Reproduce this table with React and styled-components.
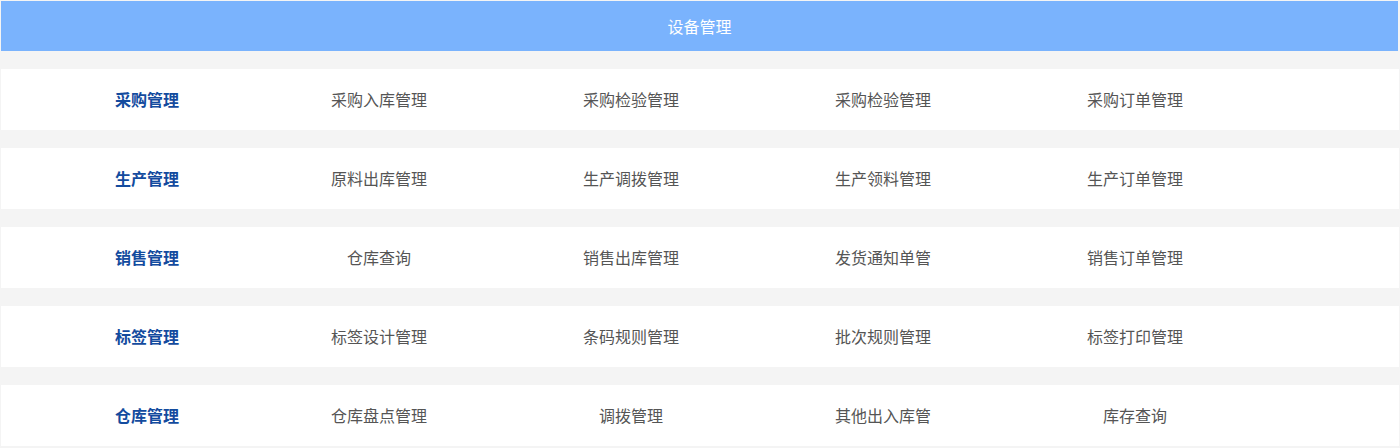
import styled, { createGlobalStyle } from "styled-components";

const GlobalStyle = createGlobalStyle`
    html, body {
        margin: 0;
        padding: 0;
        background: #f4f4f4;
        font-family: "Microsoft YaHei", "Noto Sans CJK SC", "Noto Sans", sans-serif;
    }
`;

// menu data
const groups = [
    { title: "采购管理", items: ["采购入库管理", "采购检验管理", "采购检验管理", "采购订单管理"] },
    { title: "生产管理", items: ["原料出库管理", "生产调拨管理", "生产领料管理", "生产订单管理"] },
    { title: "销售管理", items: ["仓库查询", "销售出库管理", "发货通知单管", "销售订单管理"] },
    { title: "标签管理", items: ["标签设计管理", "条码规则管理", "批次规则管理", "标签打印管理"] },
    { title: "仓库管理", items: ["仓库盘点管理", "调拨管理", "其他出入库管", "库存查询"] },
];

export default function App() {
    return (
        <>
            <GlobalStyle />
            <Page>
                <Header>设备管理</Header>
                <List>
                    {groups.map((g) => (
                        <Row key={g.title}>
                            <Cell $label>{g.title}</Cell>
                            {g.items.map((item, i) => (
                                <Cell key={i}>{item}</Cell>
                            ))}
                        </Row>
                    ))}
                </List>
            </Page>
        </>
    );
}

const Page = styled.div`
    padding: 1px 1px 0 1px;
    height: 447px;
    overflow: hidden;
`;

const Header = styled.div`
    height: 50px;
    background: #7ab3fd;
    color: #fff;
    font-size: 16px;
    display: flex;
    align-items: center;
    justify-content: center;
    margin-right: 1px;
`;

const List = styled.div`
    display: flex;
    flex-direction: column;
    gap: 18px;
    margin-top: 18px;
`;

const Row = styled.div`
    height: 61px;
    background: #fff;
    display: flex;
    align-items: center;
`;

const Cell = styled.div`
    width: 252px;
    flex: none;
    box-sizing: border-box;
    text-align: center;
    font-size: 16px;
    padding-left: ${(p) => (p.$label ? "40px" : "0")};
    color: ${(p) => (p.$label ? "#134b9e" : "#555")};
    font-weight: ${(p) => (p.$label ? 700 : 400)};
    padding-bottom: 2px;
`;
